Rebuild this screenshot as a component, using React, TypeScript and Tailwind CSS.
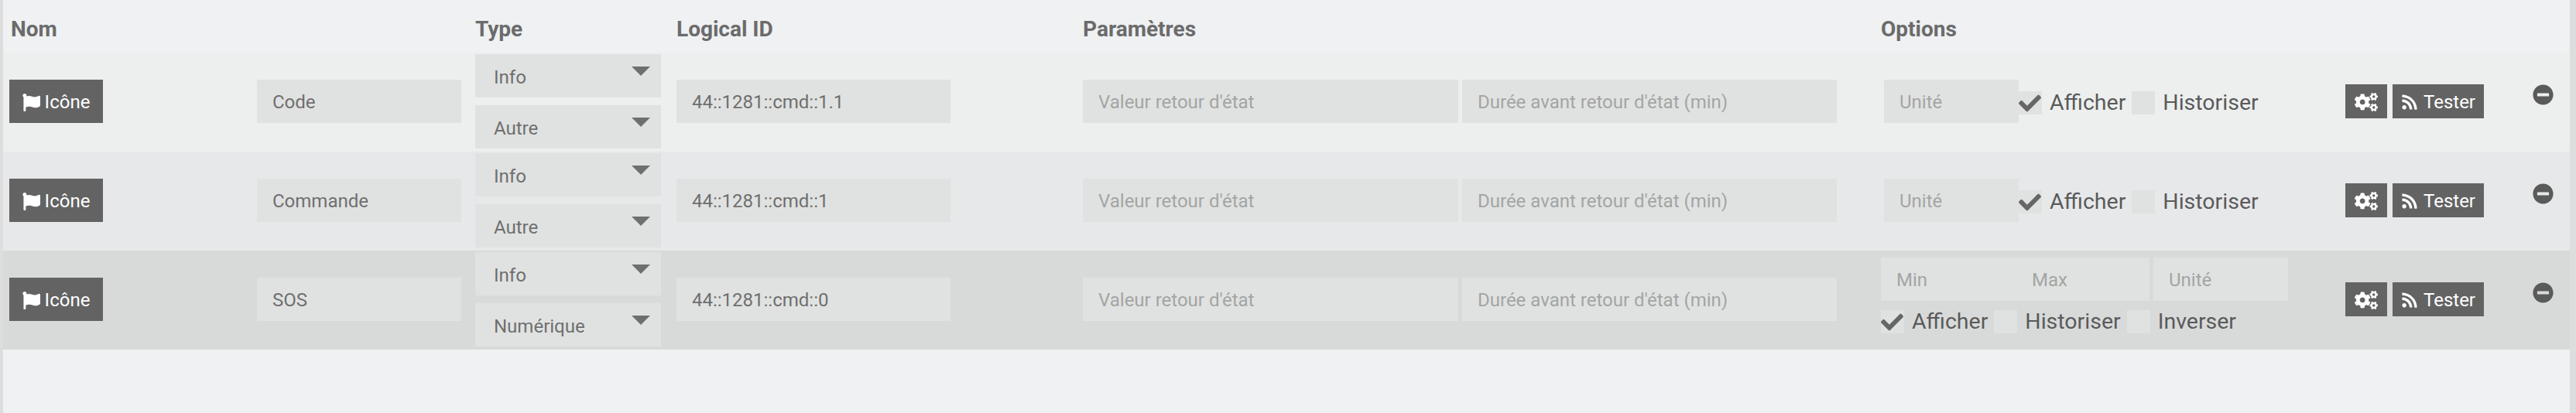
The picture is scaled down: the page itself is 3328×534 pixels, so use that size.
import React from 'react';
import { FaCheck, FaCogs, FaFlag, FaMinusCircle, FaRss } from 'react-icons/fa';

const columns = 'grid grid-cols-[610px_260px_525px_1031px_600px_290px]';
const fieldClasses =
  'h-[56px] bg-[#e0e2e1] px-[20px] pt-[2px] text-[24px] text-[#6f6f6f] outline-none placeholder:text-[#a3a5a4]';
const darkButton = 'flex h-[44px] items-center justify-center bg-[#636363] pt-[2px] text-[24px] text-white';

function Select({ value }: { value: string }) {
  return (
    <div className="relative flex h-[56px] w-[240px] items-center bg-[#e0e2e1] pl-[24px] pt-[4px] text-[24px] text-[#6f6f6f]">
      {value}
      <svg className="absolute left-[202px] top-[16px] h-[12px] w-[24px]" viewBox="0 0 24 12">
        <path d="M0 0H24L12 12Z" fill="#6f6f6f" />
      </svg>
    </div>
  );
}

function Check({ label, checked = false }: { label: string; checked?: boolean }) {
  return (
    <div className="flex items-center gap-[10px] text-[28.5px] text-[#5a5a5a]">
      <span className="relative h-[30px] w-[30px] bg-[#e0e2e1]">
        {checked && <FaCheck className="absolute left-0 top-[1px] text-[#666666]" size={29} />}
      </span>
      {label}
    </div>
  );
}

interface Command {
  name: string;
  subType: string;
  logicalId: string;
  bg: string;
  numeric?: boolean;
}

const commands: Command[] = [
  { name: 'Code', subType: 'Autre', logicalId: '44::1281::cmd::1.1', bg: 'bg-[#edefee]' },
  { name: 'Commande', subType: 'Autre', logicalId: '44::1281::cmd::1', bg: 'bg-[#e7e8ea]' },
  { name: 'SOS', subType: 'Numérique', logicalId: '44::1281::cmd::0', bg: 'bg-[#d8dad9]', numeric: true }
];

function CommandRow({ command }: { command: Command }) {
  return (
    <div className={`${columns} h-[128px] items-center pb-[2px] ${command.bg}`}>
      <div className="flex items-center justify-between pl-[8px] pr-[18px]">
        <button className="flex h-[56px] w-[121px] items-center justify-center gap-[6px] bg-[#636363] pt-[2px] text-[24px] text-white">
          <FaFlag size={23} />
          Icône
        </button>
        <input className={`${fieldClasses} w-[264px]`} defaultValue={command.name} />
      </div>

      <div className="flex flex-col gap-[10px]">
        <Select value="Info" />
        <Select value={command.subType} />
      </div>

      <div>
        <input className={`${fieldClasses} w-[354px]`} defaultValue={command.logicalId} />
      </div>

      <div className="flex gap-[5px]">
        <input className={`${fieldClasses} w-[485px]`} placeholder="Valeur retour d'état" />
        <input className={`${fieldClasses} w-[484px]`} placeholder="Durée avant retour d'état (min)" />
      </div>

      {command.numeric ? (
        <div className="flex flex-col gap-[6px] pb-[4px]">
          <div className="flex">
            <input className={`${fieldClasses} w-[175px]`} placeholder="Min" />
            <input className={`${fieldClasses} w-[172px]`} placeholder="Max" />
            <input className={`${fieldClasses} ml-[5px] w-[174px]`} placeholder="Unité" />
          </div>
          <div className="flex gap-[8px]">
            <Check label="Afficher" checked />
            <Check label="Historiser" />
            <Check label="Inverser" />
          </div>
        </div>
      ) : (
        <div className="flex items-center pl-[4px]">
          <input className={`${fieldClasses} w-[174px]`} placeholder="Unité" />
          <div className="flex gap-[8px] pt-[4px]">
            <Check label="Afficher" checked />
            <Check label="Historiser" />
          </div>
        </div>
      )}

      <div className="flex items-start">
        <button className={`${darkButton} w-[54px]`}>
          <FaCogs size={30} />
        </button>
        <button className={`${darkButton} ml-[7px] w-[118px] gap-[7px]`}>
          <FaRss size={22} />
          Tester
        </button>
        <FaMinusCircle className="ml-[63px] text-[#5a5a5a]" size={27} />
      </div>
    </div>
  );
}

export default function App() {
  return (
    <div className="h-[534px] border-l-4 border-r-8 border-[#dddddd] bg-[#eff1f3] font-['Roboto',sans-serif]">
      <div className={`${columns} h-[68px] items-center pt-[8px] text-[28px] font-bold text-[#6b6b6b]`}>
        <div className="pl-[10px]">Nom</div>
        <div>Type</div>
        <div>Logical ID</div>
        <div>Paramètres</div>
        <div>Options</div>
        <div />
      </div>
      {commands.map((command) => (
        <CommandRow key={command.name} command={command} />
      ))}
    </div>
  );
}
